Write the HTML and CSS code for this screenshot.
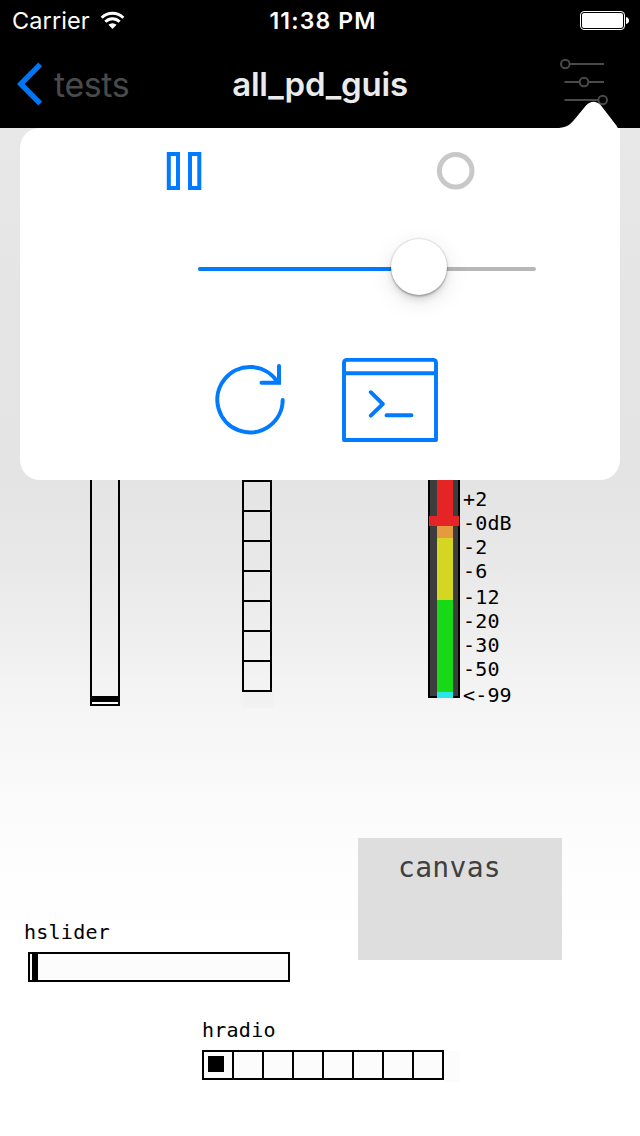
FILE: index.html
```html
<!DOCTYPE html>
<html lang="en">
<head>
<meta charset="utf-8">
<title>all_pd_guis</title>
<link rel="stylesheet" href="styles.css">
</head>
<body>
<div class="screen">
  <header class="top">
    <div class="status">
      <div class="carrier">
        <span class="carrier-name">Carrier</span>
        <svg class="wifi" width="25" height="19" viewBox="0 0 26 20">
          <g fill="none" stroke="#fff" stroke-width="3">
            <path d="M1.6 7.1A16 16 0 0 1 24.4 7.1"/>
            <path d="M5.5 11.3A10.6 10.6 0 0 1 20.5 11.3"/>
          </g>
          <path d="M8.7 14.6A6.1 6.1 0 0 1 17.3 14.6L13 19Z" fill="#fff"/>
        </svg>
      </div>
      <span class="time">11:38 PM</span>
      <svg class="battery" width="50" height="20" viewBox="0 0 50 20">
        <rect x=".5" y=".5" width="44" height="18" rx="3.5" fill="none" stroke="#fff"/>
        <rect x="2" y="2" width="41" height="15" rx="2" fill="#fff"/>
        <path d="M46 6q3 .6 3 3.5T46 13Z" fill="#fff"/>
      </svg>
    </div>
    <nav class="nav">
      <div class="back">
        <svg width="28" height="44" viewBox="0 0 28 44"><path d="M26.300 2.500 6.800 22 26.300 41.500" fill="none" stroke="#0076f5" stroke-width="5.400"/></svg>
        <span class="back-label">tests</span>
      </div>
      <h1 class="title">all_pd_guis</h1>
      <svg class="settings" width="50" height="48" viewBox="0 0 50 48" fill="none" stroke="#4a4a4a" stroke-width="2">
        <path d="M10 6H44M4.500 24H19M29 24H44M4.500 42H38"/>
        <circle cx="5.300" cy="6" r="4.300"/><circle cx="24" cy="24" r="4.300"/><circle cx="42.700" cy="42" r="4.300"/>
      </svg>
    </nav>
  </header>

  <main class="patch">
    <div class="vslider"><i class="vslider-knob"></i></div>
    <div class="vradio"><i></i><i></i><i></i><i></i><i></i><i></i><i></i></div>
    <div class="radio-shade vshade"></div>
    <div class="meter">
      <div class="levels"><i class="red"></i><i class="orange"></i><i class="yellow"></i><i class="green"></i><i class="cyan"></i></div>
      <i class="peak"></i>
    </div>
    <div class="scale">
      <span class="highest">+6</span><span>+2</span><span>-0dB</span><span>-2</span><span>-6</span><span class="apart">-12</span><span>-20</span><span>-30</span><span>-50</span><span class="apart">&lt;-99</span>
    </div>
    <div class="canvas">canvas</div>
    <span class="label hslider-label">hslider</span>
    <div class="hslider"><i class="hslider-knob"></i></div>
    <span class="label hradio-label">hradio</span>
    <div class="hradio"><i class="on"></i><i></i><i></i><i></i><i></i><i></i><i></i><i></i></div>
    <div class="radio-shade hshade"></div>
  </main>

  <svg class="arrow" width="64" height="40" viewBox="0 0 64 40"><path d="M0 28C9 28 13 26 18 20L30 5.500Q37.500 -2 45 5.500L60 25Q64 30 64 40H0Z" fill="#fff"/></svg>
  <section class="popover">
    <div class="transport">
      <svg width="36" height="40" viewBox="0 0 36 40" fill="none" stroke="#007aff" stroke-width="4"><path d="M2.800 2.900H12V37H2.800ZM24 2.900H33.300V37H24Z"/></svg>
      <svg width="40" height="40" viewBox="0 0 40 40" fill="none" stroke="#c8c8c8" stroke-width="5"><circle cx="19.700" cy="19.700" r="16.300"/></svg>
    </div>
    <div class="volume"><i class="fill"></i><i class="thumb"></i></div>
    <div class="actions">
      <svg width="76" height="84" viewBox="0 0 76 84" fill="none" stroke="#007aff" stroke-width="4" stroke-linecap="round"><path d="M70.700 42A32.700 32.700 0 1 1 66 24.800M67 8V24.800H49.500"/></svg>
      <svg width="96" height="84" viewBox="0 0 96 84" fill="none" stroke="#007aff" stroke-width="3.900" stroke-linecap="round" stroke-linejoin="round"><path d="M2 82V5Q2 1.900 5 1.900H91Q94 1.900 94 5V82ZM2 15.200H94M28.800 34.200 40.800 46 28.800 57.600M44.500 57.300H69.500"/></svg>
    </div>
  </section>
</div>
</body>
</html>
```

FILE: styles.css
```css
* { box-sizing: border-box; }
body { margin: 0; }
i { display: block; }
svg { display: block; flex: none; }

.screen {
  position: relative;
  width: 640px;
  height: 1136px;
  display: flex;
  flex-direction: column;
  overflow: hidden;
  background: #fff;
  font-family: Inter, "Liberation Sans", sans-serif;
}

.top { height: 128px; background: #000; color: #fff; }
.status {
  height: 40px;
  display: grid;
  grid-template-columns: 1fr auto 1fr;
  align-items: center;
  padding: 2px 10px 0 12px;
  font-size: 23.5px;
  line-height: 38px;
}
.carrier { display: flex; align-items: center; gap: 10px; }
.carrier-name { letter-spacing: 0.1px; }
.wifi { margin-bottom: 2px; }
.time { font-weight: 600; font-size: 23px; letter-spacing: 1.15px; padding-left: 4px; }
.battery { justify-self: end; margin-bottom: 1px; }

.nav {
  height: 88px;
  display: grid;
  grid-template-columns: 1fr auto 1fr;
  align-items: center;
  padding: 0 30px 0 14px;
}
.back { display: flex; align-items: center; gap: 12px; }
.back-label { color: #4a4a4a; font-size: 34px; letter-spacing: -0.4px; }
.title { margin: 0 0 0 16px; font-size: 33px; font-weight: 600; letter-spacing: -0.2px; color: #ebebeb; }
.settings { justify-self: end; margin-bottom: 4px; }

/* The patch is a free canvas: each object sits at its own coordinates. */
.patch {
  position: relative;
  flex: 1;
  background: linear-gradient(#e8e8e8 0, #e5e5e5 160px, #e4e4e4 350px, #e8e8e8 430px, #eee 500px, #f5f5f5 580px, #fafafa 660px, #fdfdfd 730px, #fff 810px);
  color: #000;
  font-family: "DejaVu Sans Mono", monospace;
  font-size: 20px;
  line-height: 24px;
}
.patch > * { position: absolute; }

.vslider {
  left: 90px; top: 312px; width: 30px; height: 266px;
  display: flex; flex-direction: column; justify-content: flex-end;
  padding-bottom: 2px; border: 2px solid #000;
  background: linear-gradient(transparent 98%, #fff 98%);
}
.vslider-knob { height: 6px; background: #000; }
.vradio { left: 242px; top: 352px; width: 30px; border: 2px solid #000; border-bottom: 0; }
.vradio i { height: 30px; border-bottom: 2px solid #000; }
.radio-shade { background: rgba(0, 0, 0, 0.012); }
.vshade { left: 243px; top: 564px; width: 31px; height: 16px; }

.meter { left: 428px; top: 302px; width: 32px; height: 268px; padding-left: 9px; background: #3d3d3d; border: 0; box-shadow: inset 0 0 0 2px #000; }
.levels { width: 16px; display: flex; flex-direction: column; }
.red { height: 96px; background: #e52525; }
.orange { height: 12px; background: #e69a3e; }
.yellow { height: 62px; background: #d5d622; }
.green { height: 92px; background: #16da16; }
.cyan { height: 6px; background: #29e6e9; }
.peak { position: absolute; left: 1px; top: 86px; width: 30px; height: 10px; background: #e52525; }
.scale { left: 463px; top: 333px; display: flex; flex-direction: column; letter-spacing: 0.15px; }
.scale .highest { margin-bottom: 2px; }
.scale .apart { margin-top: 2px; }

.canvas { left: 358px; top: 710px; width: 204px; height: 122px; padding: 13px 0 0 40px; background: #dedede; color: #404040; font-size: 28px; line-height: 34px; letter-spacing: 0.3px; }
.label { letter-spacing: 0.25px; }
.hslider-label { left: 24px; top: 792px; }
.hslider { left: 28px; top: 824px; width: 262px; height: 30px; display: flex; padding-left: 2px; border: 2px solid #000; background: #fcfcfc; }
.hslider-knob { width: 6px; background: #000; }
.hradio-label { left: 202px; top: 890px; }
.hradio { left: 202px; top: 922px; height: 30px; display: flex; border: 2px solid #000; border-right: 0; background: #fcfcfc; }
.hradio i { width: 30px; border-right: 2px solid #000; }
.hradio .on { background: linear-gradient(#000, #000) 4px 4px / 16px 16px no-repeat; }
.hshade { left: 444px; top: 923px; width: 16px; height: 31px; }

.arrow { position: absolute; left: 556px; top: 100px; }
.popover {
  position: absolute; left: 20px; top: 128px; width: 600px; height: 352px;
  display: flex; flex-direction: column;
  padding: 23px 0 0;
  border-radius: 20px 0 20px 20px;
  background: #fff;
}
.transport { display: flex; gap: 234px; padding-left: 146px; height: 40px; }
.volume { position: relative; width: 338px; height: 4px; margin: 76px 0 0 178px; border-radius: 2px; background: #b7b7b7; }
.fill { width: 220px; height: 4px; border-radius: 2px; background: #007aff; }
.thumb {
  position: absolute; left: 193px; top: -28px; width: 56px; height: 56px;
  border-radius: 50%; background: #fff;
  box-shadow: 0 0 1px 1px rgba(0, 0, 0, 0.1), 0 2px 2px rgba(0, 0, 0, 0.2), 0 5px 7px rgba(0, 0, 0, 0.1), 0 6px 24px rgba(0, 0, 0, 0.1);
}
.actions { display: flex; gap: 54px; padding: 87px 0 0 192px; }
```
